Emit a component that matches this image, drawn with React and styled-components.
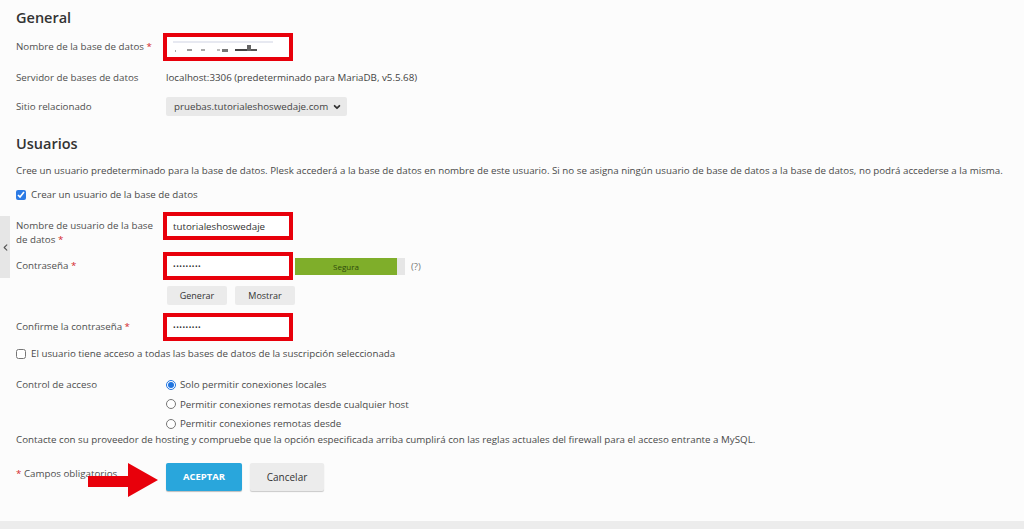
import React from 'react'
import styled, { createGlobalStyle } from 'styled-components'

const Global = createGlobalStyle`
  html, body { margin: 0; padding: 0; background: #ececec; }
  body { font-family: "Open Sans", "Noto Sans", sans-serif; font-size: 9.75px; color: #4a4a4a; }
  * { box-sizing: border-box; }
`

const Chevron = ({ dir = 'down', size = 8 }) => (
  <svg width={size} height={size} viewBox="0 0 10 10" fill="none" stroke="currentColor" strokeWidth={dir === 'down' ? 2.2 : 1.2} strokeLinecap="round" strokeLinejoin="round">
    {dir === 'down' ? <polyline points="2,3.5 5,6.5 8,3.5" /> : <polyline points="6.5,2 3.5,5 6.5,8" />}
  </svg>
)

const App = () => {
  return (
    <>
      <Global />
      <Page>
        <SideTab><Chevron dir="left" size={9} /></SideTab>

        <Heading $top={8}>General</Heading>

        <Row $top={5}>
          <Label>Nombre de la base de datos <Req>*</Req></Label>
          <Highlight>
            <Blurred viewBox="0 0 122 20" width="122" height="20">
              <rect x="6" y="4" width="100" height="2" fill="#e7e9f1" />
              <rect x="8" y="13" width="1" height="2" fill="#aaa" />
              <rect x="20" y="12" width="5" height="2" fill="#999" />
              <rect x="34" y="12" width="4" height="2" fill="#aaa" />
              <rect x="50" y="12" width="3" height="2" fill="#bbb" />
              <rect x="55" y="12" width="6" height="3" fill="#777" />
              <rect x="68" y="12" width="12" height="2" fill="#444" />
              <rect x="80" y="8" width="4" height="6" fill="#666" />
              <rect x="84" y="12" width="6" height="2" fill="#555" />
            </Blurred>
          </Highlight>
        </Row>

        <Row $top={8}>
          <Label>Servidor de bases de datos</Label>
          <Value>localhost:3306 (predeterminado para MariaDB, v5.5.68)</Value>
        </Row>

        <Row $top={10}>
          <Label>Sitio relacionado</Label>
          <Select>
            <span>pruebas.tutorialeshoswedaje.com</span>
            <Chevron />
          </Select>
        </Row>

        <Heading $top={18}>Usuarios</Heading>

        <Text $top={9}>
          Cree un usuario predeterminado para la base de datos. Plesk accederá a la base de datos en nombre de este usuario. Si no se asigna ningún usuario de base de datos a la base de datos, no podrá accederse a la misma.
        </Text>

        <Check $top={8}>
          <input type="checkbox" defaultChecked />
          Crear un usuario de la base de datos
        </Check>

        <Row $top={9} $align="start">
          <Label $pad={7} $wrap>Nombre de usuario de la base de datos <Req>*</Req></Label>
          <Highlight><Input defaultValue="tutorialeshoswedaje" /></Highlight>
        </Row>

        <Row $top={5}>
          <Label>Contraseña <Req>*</Req></Label>
          <FieldLine>
            <Highlight><Input type="password" defaultValue="123456789" /></Highlight>
            <Strength><span>Segura</span></Strength>
            <Hint>(?)</Hint>
          </FieldLine>
        </Row>

        <Row $top={6}>
          <span />
          <Buttons>
            <SmallButton>Generar</SmallButton>
            <SmallButton>Mostrar</SmallButton>
          </Buttons>
        </Row>

        <Row $top={8}>
          <Label>Confirme la contraseña <Req>*</Req></Label>
          <Highlight><Input type="password" defaultValue="123456789" /></Highlight>
        </Row>

        <Check $top={5}>
          <input type="checkbox" />
          El usuario tiene acceso a todas las bases de datos de la suscripción seleccionada
        </Check>

        <Row $top={13} $align="start">
          <Label $line={19}>Control de acceso</Label>
          <Radios>
            <Radio><input type="radio" name="acc" defaultChecked />Solo permitir conexiones locales</Radio>
            <Radio><input type="radio" name="acc" />Permitir conexiones remotas desde cualquier host</Radio>
            <Radio><input type="radio" name="acc" />Permitir conexiones remotas desde</Radio>
          </Radios>
        </Row>

        <Text $top={-1} $line={14}>
          Contacte con su proveedor de hosting y compruebe que la opción especificada arriba cumplirá con las reglas actuales del firewall para el acceso entrante a MySQL.
        </Text>

        <Footer>
          <FootNote><Req>*</Req> Campos obligatorios</FootNote>
          <FooterButtons>
            <Primary>ACEPTAR</Primary>
            <Secondary>Cancelar</Secondary>
          </FooterButtons>
          <Arrow viewBox="0 0 72 36" width="72" height="36">
            <polygon points="0,14 40,14 40,1 70,18 40,35 40,25 0,25" fill="#e8000b" />
          </Arrow>
        </Footer>
      </Page>
    </>
  )
}

const Page = styled.div`
  position: relative;
  height: 521px;
  background: #fcfcfc;
  padding: 0 16px;
  display: flex;
  flex-direction: column;
`

const SideTab = styled.div`
  position: absolute;
  left: 0;
  top: 216px;
  width: 10px;
  height: 62px;
  background: #e6e6e6;
  display: flex;
  align-items: center;
  justify-content: center;
  color: #555;
`

const Heading = styled.h2`
  margin: ${p => p.$top}px 0 0;
  font-size: 14.5px;
  line-height: 20px;
  font-weight: 600;
  color: #333;
`

const Row = styled.div`
  margin-top: ${p => p.$top}px;
  display: grid;
  grid-template-columns: 150px 1fr;
  align-items: ${p => p.$align || 'center'};
  min-height: 18px;
`

const Label = styled.div`
  line-height: ${p => p.$line || 14}px;
  padding-top: ${p => p.$pad || 0}px;
  max-width: ${p => (p.$wrap ? '142px' : 'none')};
  white-space: ${p => (p.$wrap ? 'normal' : 'nowrap')};
  color: #4f4f4f;
`

const FootNote = styled(Label)`
  padding-bottom: 5px;
`

const Req = styled.span`
  color: #d3272c;
`

const Value = styled.div`
  line-height: 18px;
  color: #444;
`

const Highlight = styled.div`
  margin-left: -3px;
  width: 130px;
  height: 28px;
  border: 4px solid #e8000b;
  background: #fff;
  display: flex;
  align-items: center;
`

const Blurred = styled.svg`
  display: block;
`

const Input = styled.input`
  width: 100%;
  height: 100%;
  border: none;
  outline: none;
  background: #fff;
  padding: 0 6px;
  font: inherit;
  font-size: ${p => (p.type === 'password' ? '7px' : '9.75px')};
  color: #333;
  letter-spacing: ${p => (p.type === 'password' ? '0.5px' : '0')};
`

const Select = styled.div`
  width: 181px;
  height: 19px;
  background: #e9e9e9;
  border-radius: 2px;
  display: flex;
  align-items: center;
  justify-content: space-between;
  padding: 0 6px 0 8px;
  color: #444;
  svg { color: #333; }
`

const Text = styled.p`
  margin: ${p => p.$top}px 0 0;
  line-height: ${p => p.$line || 16}px;
  color: #4a4a4a;
  white-space: nowrap;
`

const Check = styled.label`
  margin-top: ${p => p.$top}px;
  display: flex;
  align-items: center;
  gap: 5px;
  line-height: 16px;
  input {
    margin: 0;
    width: 10px;
    height: 10px;
    accent-color: #2c7be5;
  }
`

const FieldLine = styled.div`
  display: flex;
  align-items: center;
`

const Strength = styled.div`
  margin-left: 2px;
  width: 110px;
  height: 17px;
  background: #e6e6e6;
  span {
    display: flex;
    align-items: center;
    justify-content: center;
    width: 102px;
    height: 100%;
    background: #7fae2a;
    color: #2f4a0c;
    font-size: 8px;
  }
`

const Hint = styled.span`
  margin-left: 6px;
  color: #777;
  font-size: 9.5px;
`

const Buttons = styled.div`
  display: flex;
  gap: 8px;
  padding-left: 1px;
`

const SmallButton = styled.button`
  width: 60px;
  height: 19px;
  border: none;
  border-radius: 2px;
  background: #ebebeb;
  font: inherit;
  font-size: 9px;
  color: #333;
  padding: 0;
`

const Radios = styled.div`
  display: flex;
  flex-direction: column;
`

const Radio = styled.label`
  display: flex;
  align-items: center;
  gap: 4px;
  height: 19.5px;
  input {
    margin: 0;
    width: 10px;
    height: 10px;
    accent-color: #1f74e0;
  }
`

const Footer = styled.div`
  position: relative;
  margin-top: 16px;
  display: grid;
  grid-template-columns: 150px 1fr;
  align-items: center;
  height: 28px;
`

const FooterButtons = styled.div`
  display: flex;
  gap: 8px;
`

const Primary = styled.button`
  width: 76px;
  height: 28px;
  border: none;
  border-radius: 2px;
  background: #29a6dc;
  box-shadow: 0 1px 1px rgba(0, 0, 0, 0.25);
  color: #fff;
  font: inherit;
  font-size: 9.5px;
  font-weight: 700;
  padding: 0;
`

const Secondary = styled.button`
  width: 74px;
  height: 28px;
  border: none;
  border-radius: 2px;
  background: #ececec;
  box-shadow: 0 1px 1px rgba(0, 0, 0, 0.2);
  color: #333;
  font: inherit;
  font-size: 10px;
  padding: 0;
`

const Arrow = styled.svg`
  position: absolute;
  left: 72px;
  top: -1px;
`

export default App
